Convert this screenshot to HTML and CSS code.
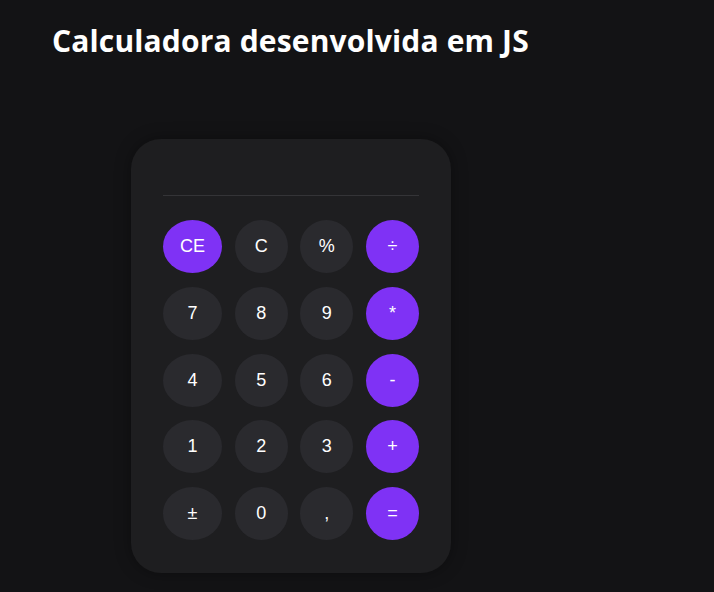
FILE: index.html
```html
<!DOCTYPE html>
<html lang="pt-BR">
<head>
<meta charset="utf-8">
<title>Calculadora</title>
<link rel="stylesheet" href="styles.css">
</head>
<body>
<main class="page">
  <h1 class="title">Calculadora desenvolvida em JS</h1>
  <section class="calc">
    <div class="display"></div>
    <div class="keys">
      <button class="key op">CE</button>
      <button class="key">C</button>
      <button class="key">%</button>
      <button class="key op">÷</button>
      <button class="key">7</button>
      <button class="key">8</button>
      <button class="key">9</button>
      <button class="key op">*</button>
      <button class="key">4</button>
      <button class="key">5</button>
      <button class="key">6</button>
      <button class="key op">-</button>
      <button class="key">1</button>
      <button class="key">2</button>
      <button class="key">3</button>
      <button class="key op">+</button>
      <button class="key">±</button>
      <button class="key">0</button>
      <button class="key">,</button>
      <button class="key op">=</button>
    </div>
  </section>
</main>
</body>
</html>
```
FILE: styles.css
```css
html, body {
  margin: 0;
  background: #131315;
  height: 100%;
}
.page {
  display: flex;
  flex-direction: column;
  align-items: flex-start;
  padding: 0 0 0 52px;
}
.title {
  margin: 19px 0 0 0;
  font-family: "Open Sans", "Noto Sans", sans-serif;
  font-weight: 700;
  font-size: 30px;
  line-height: 44px;
  color: #ffffff;
  letter-spacing: 0.15px;
}
.calc {
  margin: 76px 0 0 79px;
  width: 256px;
  padding: 32px 32px 33px;
  background: #1e1e20;
  border-radius: 30px;
  box-shadow: 0 0 16px rgba(0, 0, 0, 0.35);
}
.display {
  height: 24px;
  border-bottom: 1px solid #343437;
  margin-bottom: 24px;
}
.keys {
  display: grid;
  grid-template-columns: 59px 53px 53px 53px;
  grid-auto-rows: 53px;
  justify-content: space-between;
  row-gap: 13.75px;
}
.key {
  border: none;
  border-radius: 50%;
  background: #2a2a2e;
  color: #ffffff;
  font-family: "Liberation Sans", Arial, sans-serif;
  font-size: 18px;
  padding: 0;
}
.key.op {
  background: #7f32f5;
}
```
